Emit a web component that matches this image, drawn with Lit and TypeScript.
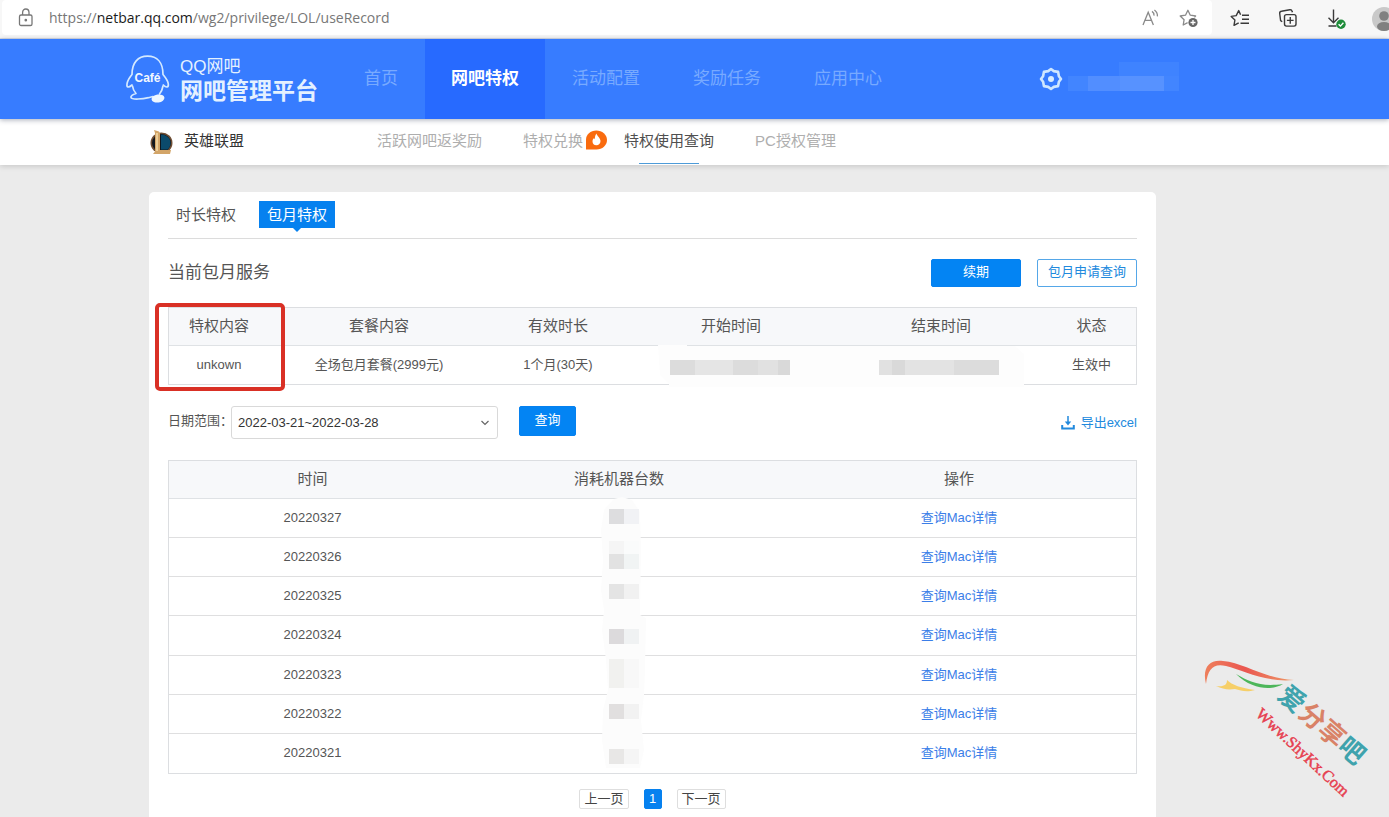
import { LitElement, html, css, svg } from "lit";
import { customElement } from "lit/decorators.js";
import { classMap } from "lit/directives/class-map.js";

const base = css`
  *, *::before, *::after { box-sizing: border-box; }
  a { color: inherit; text-decoration: none; }
  button { font: inherit; color: inherit; background: none; border: 0; padding: 0; margin: 0; cursor: pointer; }
  svg { display: block; flex: none; }
`;

@customElement("browser-bar")
class BrowserBar extends LitElement {
  static styles = [base, css`
    :host { display: flex; align-items: flex-start; height: 39px; background: #f7f7f7; border-bottom: 1px solid #d8dde6; }
    .address { flex: 1; display: flex; align-items: center; height: 35px; margin-left: 2px; padding: 0 12px 0 14px; background: #fff; border-radius: 4px; color: #777;
      font: 14px/20px "Open Sans", "Noto Sans", sans-serif; }
    .url { flex: 1; margin-left: 13px; white-space: nowrap; }
    .domain { color: #1b1b1b; }
    .inner { display: flex; gap: 16px; }
    .tools { display: flex; gap: 24px; height: 35px; align-items: center; padding-left: 16px; width: 177px; overflow: hidden; color: #3a3a3a; flex: none; }
    .tools button { flex: none; }
  `];
  render() {
    return html`
      <div class="address">
        <svg width="20" height="22" viewBox="0 0 20 22" fill="none" stroke="#777" stroke-width="1.3">
          <rect x="3.5" y="8" width="12.5" height="10.5" rx="1.6"/><path d="M6.6 8V5.6a3.2 3.6 0 0 1 6.4 0V8"/><circle cx="9.8" cy="13.2" r=".7" fill="#777"/>
        </svg>
        <span class="url">https://<span class="domain">netbar.qq.com</span>/wg2/privilege/LOL/useRecord</span>
        <div class="inner">
          <button aria-label="大声朗读">
            <svg width="22" height="22" viewBox="0 0 22 22" fill="none" stroke="#8a8a8a" stroke-width="1.3">
              <path d="M3 18 8.2 5.2 13.4 18M5 13.4h6.5M12 4.4a4.5 4.5 0 0 1 2 4.2M14.4 3a7.2 7.2 0 0 1 3 6.4"/>
            </svg>
          </button>
          <button aria-label="添加到收藏夹">
            <svg width="22" height="22" viewBox="0 0 22 22" fill="none" stroke="#8a8a8a" stroke-width="1.3" stroke-linejoin="round">
              <path d="M9.6 15.7 5.2 18l.9-5.3L2.2 9l5.3-.8L9.9 3.3l2.4 4.9 5.3.8-1.2 1.2"/>
              <circle cx="15" cy="15.5" r="4.6" fill="#666" stroke="none"/><path d="M15 13v5M12.5 15.5h5" stroke="#fff"/>
            </svg>
          </button>
        </div>
      </div>
      <div class="tools">
        <button aria-label="收藏夹">
          <svg width="24" height="24" viewBox="0 0 24 24" fill="none" stroke="currentColor" stroke-width="1.4" stroke-linejoin="round">
            <path d="M12.6 8.7 10.7 4.6 8.2 9.6l-5 .8 3.7 3.6-.9 5.3 4.7-2.5M14 9.2h7M14 13.2h7M12.5 17.2H21"/>
          </svg>
        </button>
        <button aria-label="集锦">
          <svg width="24" height="24" viewBox="0 0 24 24" fill="none" stroke="currentColor" stroke-width="1.4">
            <rect x="8.5" y="8.6" width="11.5" height="11.5" rx="2"/><path d="M14.25 11v6.7M10.9 14.35h6.7M6.2 15.8 4.6 14.6 3.7 7.5a2 2 0 0 1 1.7-2.2l8.4-1.5a2 2 0 0 1 2.3 1.5l.3 1"/>
          </svg>
        </button>
        <button aria-label="下载">
          <svg width="24" height="24" viewBox="0 0 24 24" fill="none" stroke="currentColor" stroke-width="1.4">
            <path d="M9.5 3.500v13M4.5 11.800l5 5 5-5M4.500 20h8"/><circle cx="17" cy="18.3" r="4.7" fill="#1e8c3a" stroke="none"/><path d="m14.6 18.3 1.8 1.8 3-3.3" stroke="#fff"/>
          </svg>
        </button>
        <button aria-label="个人资料">
          <svg width="26" height="26" viewBox="0 0 26 26"><circle cx="12" cy="14" r="12" fill="#c9c9c9"/><circle cx="12" cy="11" r="4.8" fill="#808080"/><ellipse cx="12" cy="21.5" rx="7" ry="4.5" fill="#808080"/></svg>
        </button>
      </div>`;
  }
}

@customElement("site-header")
class SiteHeader extends LitElement {
  static styles = [base, css`
    :host { display: flex; position: relative; z-index: 2; height: 80px; padding-left: 125px; background: #377cff; color: #fff; box-shadow: 0 1px 5px rgba(40, 50, 80, .4); }
    .logo { display: flex; align-items: center; gap: 9px; width: 213px; }
    .name { display: flex; flex-direction: column; padding-top: 2px; color: #e4f1ff; white-space: nowrap; }
    .small { font-size: 17px; line-height: 22px; }
    .large { font-size: 23px; line-height: 26px; font-weight: 700; }
    nav { display: flex; gap: 1px; }
    .item { padding: 0 26px; font-size: 17px; line-height: 80px; color: #78aaff; white-space: nowrap; }
    .active { background: #276aff; color: #fff; font-weight: 700; }
    .account { display: flex; align-items: center; gap: 4px; margin-left: 130px; }
  `];
  render() {
    const items = ["首页", "网吧特权", "活动配置", "奖励任务", "应用中心"];
    return html`
      <a class="logo" href="#">
        <svg width="46" height="52" viewBox="0 0 46 52">
          <g fill="none" stroke="#d4e9ff" stroke-width="1.7" stroke-linejoin="round" stroke-linecap="round">
            <path d="M7 32C3.500 35 1.500 34.500 2 31c.4-3 2.500-6.500 5-9.500C7 9.500 13 3.200 22.500 3.200S38 9.500 38 21.500c2.500 3 5 6.500 5.300 9.500.4 3.500-2 4-5 1"/>
            <path d="M7.500 33c.5 3.500 1.500 5.500 3.500 7.500-3.500 1-5.500 2.500-5 4 .8 2.500 12 1.500 17.500.2 2-.6 3.500-1 4.500-1.200M38 33c-.5 3-1.500 5.500-3.500 8"/>
          </g>
          <ellipse cx="33" cy="45.500" rx="6.500" ry="4" transform="rotate(-8 33 45.500)" fill="#eef7ff"/>
          <text x="22.500" y="28.500" text-anchor="middle" font-family="Liberation Sans, sans-serif" font-weight="700" font-size="12" fill="#f2f8ff">Café</text>
        </svg>
        <span class="name"><span class="small">QQ网吧</span><span class="large">网吧管理平台</span></span>
      </a>
      <nav>${items.map((t, i) => html`<a href="#" class=${classMap({ item: true, active: i === 1 })}>${t}</a>`)}</nav>
      <div class="account">
        <svg width="26" height="26" viewBox="0 0 26 26" fill="none" stroke="#cfe7ff" stroke-width="2.6" stroke-linejoin="round">
          <path d="m13 3 2.800 2.100 4.300.8.800 4.300L23 13l-2.100 2.800-.8 4.300-4.300.8L13 23l-2.800-2.100-4.300-.8-.8-4.300L3 13l2.100-2.800.8-4.300 4.300-.8z"/><circle cx="13" cy="13" r="3" fill="#d9edff" stroke="none"/>
        </svg>
        <svg width="112" height="38" viewBox="0 0 112 38">
          <path fill="#3f83ff" d="M51 2h60v14H51z"/><path fill="#4285ff" d="M0 16h20v15H0zM96 16h15v15H96z"/><path fill="#528eff" d="M20 16h32v15H20z"/><path fill="#5792ff" d="M52 16h44v15H52z"/>
        </svg>
      </div>`;
  }
}

@customElement("game-nav")
class GameNav extends LitElement {
  static styles = [base, css`
    :host { display: flex; position: relative; height: 46px; padding-left: 149px; background: #fff; box-shadow: 0 2px 5px rgba(0, 0, 0, .13); font-size: 15px; line-height: 44px; white-space: nowrap; }
    .game { display: flex; align-items: flex-start; gap: 11px; width: 228px; color: #333; }
    .game svg { margin-top: 10px; }
    nav { display: flex; gap: 41px; color: #aeaeae; }
    .item { position: relative; }
    .current { color: #505050; }
    .current::after { content: ""; position: absolute; left: 15px; right: 15px; bottom: 1px; height: 1px; background: #4d9bd8; }
    .hot { position: absolute; left: 100%; top: 11px; margin-left: 2px; }
  `];
  render() {
    return html`
      <div class="game">
        <svg width="24" height="26" viewBox="0 0 24 26">
          <ellipse cx="12.500" cy="14" rx="11" ry="10.500" fill="#6e4d33"/><ellipse cx="12.500" cy="14" rx="9.500" ry="9" fill="#11161c"/>
          <path d="M12 5.500c6 .3 9.500 4 9.500 8.500 0 2.500-1 4.800-2.800 6.500H12z" fill="#0b4a6b"/>
          <path d="m5 1 5 1.500 1 2V21h11l-1 4H4l2-2.500V4z" fill="#d3a568"/><path d="M8 4v18" stroke="#f4dcaa" stroke-width="1.500"/>
        </svg>
        <span>英雄联盟</span>
      </div>
      <nav>
        <a class="item" href="#">活跃网吧返奖励</a>
        <a class="item" href="#">特权兑换<svg class="hot" width="23" height="20" viewBox="0 0 23 20">
          <path d="M1 19.500V9.500C1 4.500 5.500.5 11.300.5S22 4.700 22 10s-4.700 9.500-10.500 9.500z" fill="#f96b0f"/>
          <path d="M11.500 3.500c.4 2.500 4 4.500 4 7.500 0 2.500-1.700 4.200-4.100 4.200S7.500 13.600 7.500 11.200c0-1.400.8-2.400 1.500-3.200.2.800.4 1.100.8 1.300 0-2.300.5-4.300 1.700-5.800z" fill="#fff"/></svg></a>
        <a class="item current" href="#">特权使用查询</a>
        <a class="item" href="#">PC授权管理</a>
      </nav>`;
  }
}

const blocks: [number, number, string, string][] = [
  [49, 15, "#dddddf", "#f1f2f5"], [81, 14, "#f5f5f5", "#fafbfb"], [94, 15, "#e2e2e2", "#f1f4f4"], [124, 15, "#e4e4e4", "#f1f1f1"],
  [169, 15, "#dcdadc", "#f0f2f3"], [199, 29, "#f1f1ef", "#f8f8f8"], [244, 15, "#e1dfdf", "#f2f2f2"], [289, 15, "#e8e7e6", "#f5f5f5"],
];

@customElement("record-panel")
class RecordPanel extends LitElement {
  static styles = [base, css`
    :host { display: block; width: 1007px; max-width: 100%; padding: 0 19px 8px; background: #fff; border-radius: 5px 5px 0 0; color: #555; font-size: 13px; }
    .tabs { display: flex; gap: 15px; height: 47px; padding-top: 9px; border-bottom: 1px solid #dcdcdc; }
    .tab { position: relative; height: 27px; padding: 0 8px; font-size: 15px; line-height: 27px; }
    .selected { background: #0681ef; color: #fff; }
    .selected::after { content: ""; position: absolute; top: 100%; left: 50%; margin-left: -4px; border: 4px solid transparent; border-top-color: #0681ef; border-bottom: 0; }
    .heading { display: flex; align-items: center; gap: 16px; margin-top: 20px; }
    h2 { flex: 1; margin: 0; font-size: 17px; line-height: 28px; font-weight: 400; }
    .btn { height: 28px; border: 1px solid #0681ef; border-radius: 2px; background: #0384f3; color: #fff; line-height: 24px; padding-bottom: 2px; white-space: nowrap; }
    .renew { width: 90px; }
    .ghost { padding: 0 10px 2px; background: #fff; color: #2189dd; border-color: #55a7e8; }
    .sheet { position: relative; margin-top: 20px; }
    table { width: 100%; table-layout: fixed; border-spacing: 0; border: 1px solid #dcdee1; text-align: center; line-height: 20px; }
    th, td { padding: 0; height: 38px; font-weight: 400; }
    th { padding-bottom: 1px; font-size: 15px; background: #f7f8fa; border-bottom: 1px solid #dfe2e5; }
    .c1 { width: 100px; } .c2 { width: 220px; } .c3 { width: 138px; } .c4 { width: 208px; } .c5 { width: 212px; }
    .mark { position: absolute; left: -13px; top: -4px; width: 130px; height: 88px; border: 4px solid #d93025; border-radius: 5px; pointer-events: none; }
    .blur { position: absolute; pointer-events: none; }
    .dates { left: 488px; top: 38px; }
    .counts { left: 432px; top: 0; }
    .filter { display: flex; align-items: flex-start; margin-top: 21px; }
    label { line-height: 30px; width: 63px; white-space: nowrap; }
    .pick { position: relative; width: 267px; }
    select { appearance: none; display: block; width: 100%; height: 33px; padding: 0 6px; border: 1px solid #d9d9d9; border-radius: 3px; background: #fff; color: #333; font: inherit; }
    .chevron { position: absolute; right: 8px; top: 12px; pointer-events: none; }
    .query { width: 57px; height: 30px; margin-left: 21px; }
    .export { display: flex; align-items: center; gap: 6px; margin-left: auto; line-height: 34px; color: #2189dd; }
    .log { height: 314px; }
    .log tbody td { border-bottom: 1px solid #dfdfe0; }
    .log tbody tr:last-child td { border-bottom: 0; }
    .l1 { width: 287px; } .l2 { width: 326px; }
    .link { color: #3b7ee8; }
    .pages { display: flex; justify-content: center; gap: 15px; margin-top: 15px; line-height: 18px; color: #444; }
    .page { height: 20px; padding: 0 4px; border: 1px solid #dedede; border-radius: 2px; background: #fff; }
    .on { width: 18px; background: #0681ef; border-color: #0681ef; color: #fff; }
  `];
  render() {
    const days = [27, 26, 25, 24, 23, 22, 21];
    return html`
      <div class="tabs"><button class="tab">时长特权</button><button class="tab selected">包月特权</button></div>
      <div class="heading"><h2>当前包月服务</h2><button class="btn renew">续期</button><button class="btn ghost">包月申请查询</button></div>
      <div class="sheet">
        <table>
          <colgroup><col class="c1"><col class="c2"><col class="c3"><col class="c4"><col class="c5"><col></colgroup>
          <thead><tr><th>特权内容</th><th>套餐内容</th><th>有效时长</th><th>开始时间</th><th>结束时间</th><th>状态</th></tr></thead>
          <tbody><tr><td>unkown</td><td>全场包月套餐(2999元)</td><td>1个月(30天)</td><td></td><td></td><td>生效中</td></tr></tbody>
        </table>
        <svg class="blur dates" width="372" height="44" viewBox="0 0 372 44">
          <path d="M2 0h29v1h328l9 8v33H13V39L4 30z" fill="#fdfdfd"/>
          <g transform="translate(14 15)"><path d="M0 0h25v15H0z" fill="#dcdcdc"/><path d="M25 0h38v15H25z" fill="#e5e5e5"/><path d="M63 0h25v15H63z" fill="#dcdcdc"/><path d="M88 0h20v15H88z" fill="#e1e1e1"/><path d="M108 0h12v15h-12z" fill="#d9d9d9"/></g>
          <g transform="translate(223 15)"><path d="M0 0h13v15H0z" fill="#e1e1e1"/><path d="M13 0h13v15H13z" fill="#d9d9d9"/><path d="M26 0h49v15H26z" fill="#e3e3e3"/><path d="M75 0h45v15H75z" fill="#dcdcdc"/></g>
        </svg>
        <div class="mark"></div>
      </div>
      <div class="filter">
        <label for="range">日期范围：</label>
        <div class="pick">
          <select id="range"><option>2022-03-21~2022-03-28</option></select>
          <svg class="chevron" width="10" height="10" viewBox="0 0 10 10" fill="none" stroke="#666" stroke-width="1.2"><path d="m1.500 3 3.500 3.500L8.500 3"/></svg>
        </div>
        <button class="btn query">查询</button>
        <a class="export" href="#"><svg width="14" height="14" viewBox="0 0 14 14" fill="none" stroke="#2189dd" stroke-width="2"><path d="M7 0v6" stroke-width="1.500"/><path d="M3.800 5.500h6.400L7 9.500z" fill="#2189dd" stroke="none"/><path d="M1.200 9v3.600h11.600V9"/></svg>导出excel</a>
      </div>
      <div class="sheet">
        <table class="log">
          <colgroup><col class="l1"><col class="l2"><col></colgroup>
          <thead><tr><th>时间</th><th>消耗机器台数</th><th>操作</th></tr></thead>
          <tbody>${days.map(d => html`<tr><td>202203${d}</td><td></td><td><a class="link" href="#">查询Mac详情</a></td></tr>`)}</tbody>
        </table>
        <svg class="blur counts" width="48" height="312" viewBox="0 0 48 312">
          <path d="M14 39 22 37 32 40 40 52 41 90 40 155 46 158 45 210 44 235 41 260 44 290 40 308H6L2 280 3 250 8 230 6 200 2 170 4 150 1 130 3 100 1 70 4 50z" fill="#fcfcfc"/>
          ${blocks.map(([y, h, a, b]) => svg`<rect x="9" y=${y} width="15" height=${h} fill=${a}/><rect x="24" y=${y} width="15" height=${h} fill=${b}/>`)}
        </svg>
      </div>
      <div class="pages"><button class="page">上一页</button><button class="page on">1</button><button class="page">下一页</button></div>`;
  }
}

@customElement("site-watermark")
class SiteWatermark extends LitElement {
  static styles = [base, css`:host { display: block; pointer-events: none; }`];
  render() {
    return html`<svg width="185" height="155" viewBox="0 0 185 155">
      <defs><linearGradient id="r"><stop offset="0" stop-color="#ee7f5c"/><stop offset=".45" stop-color="#ea5750"/><stop offset="1" stop-color="#ee9a68"/></linearGradient></defs>
      <path d="M7 34C3 18 10 9 24 11c22 2 42 18 71 19-28 3-51-10-68-14C14 13 9 19 7 34z" fill="url(#r)"/>
      <path d="M37 24c14 8 24 13 47 10-9 6-30 7-47-10z" fill="#4db65a"/>
      <path d="M17 36c8 1 11-1 11-6 5 5 14 8 28 10-10 3-14 0-20-1-8 1-12 0-19-3z" fill="#f6cf68"/>
      <g font-family="Noto Sans CJK SC, sans-serif" font-weight="700" font-size="26" text-anchor="middle" transform="translate(93 49) rotate(41)">
        <text x="0" y="9" fill="#3fa3ad">爱</text><text x="27" y="9" fill="#d98267">分</text><text x="53" y="9" fill="#d98267">享</text><text x="79" y="9" fill="#3fa3ad">吧</text>
      </g>
      <text transform="translate(56 65) rotate(43)" font-family="Liberation Serif, serif" font-size="16" fill="#e63f50" stroke="#e63f50" stroke-width=".5">Www.ShyKx.Com</text>
    </svg>`;
  }
}

@customElement("app-root")
class AppRoot extends LitElement {
  static styles = [base, css`
    :host { display: flex; flex-direction: column; position: relative; height: 100vh; overflow: hidden; background: #ebebeb; font-family: "Liberation Sans", "Noto Sans CJK SC", sans-serif; }
    browser-bar, site-header, game-nav { flex: none; }
    main { flex: 1; display: flex; padding: 27px 20px 0 149px; }
    site-watermark { position: absolute; right: 5px; bottom: 12px; }
  `];
  render() {
    return html`<browser-bar></browser-bar><site-header></site-header><game-nav></game-nav>
      <main><record-panel></record-panel></main><site-watermark></site-watermark>`;
  }
}
